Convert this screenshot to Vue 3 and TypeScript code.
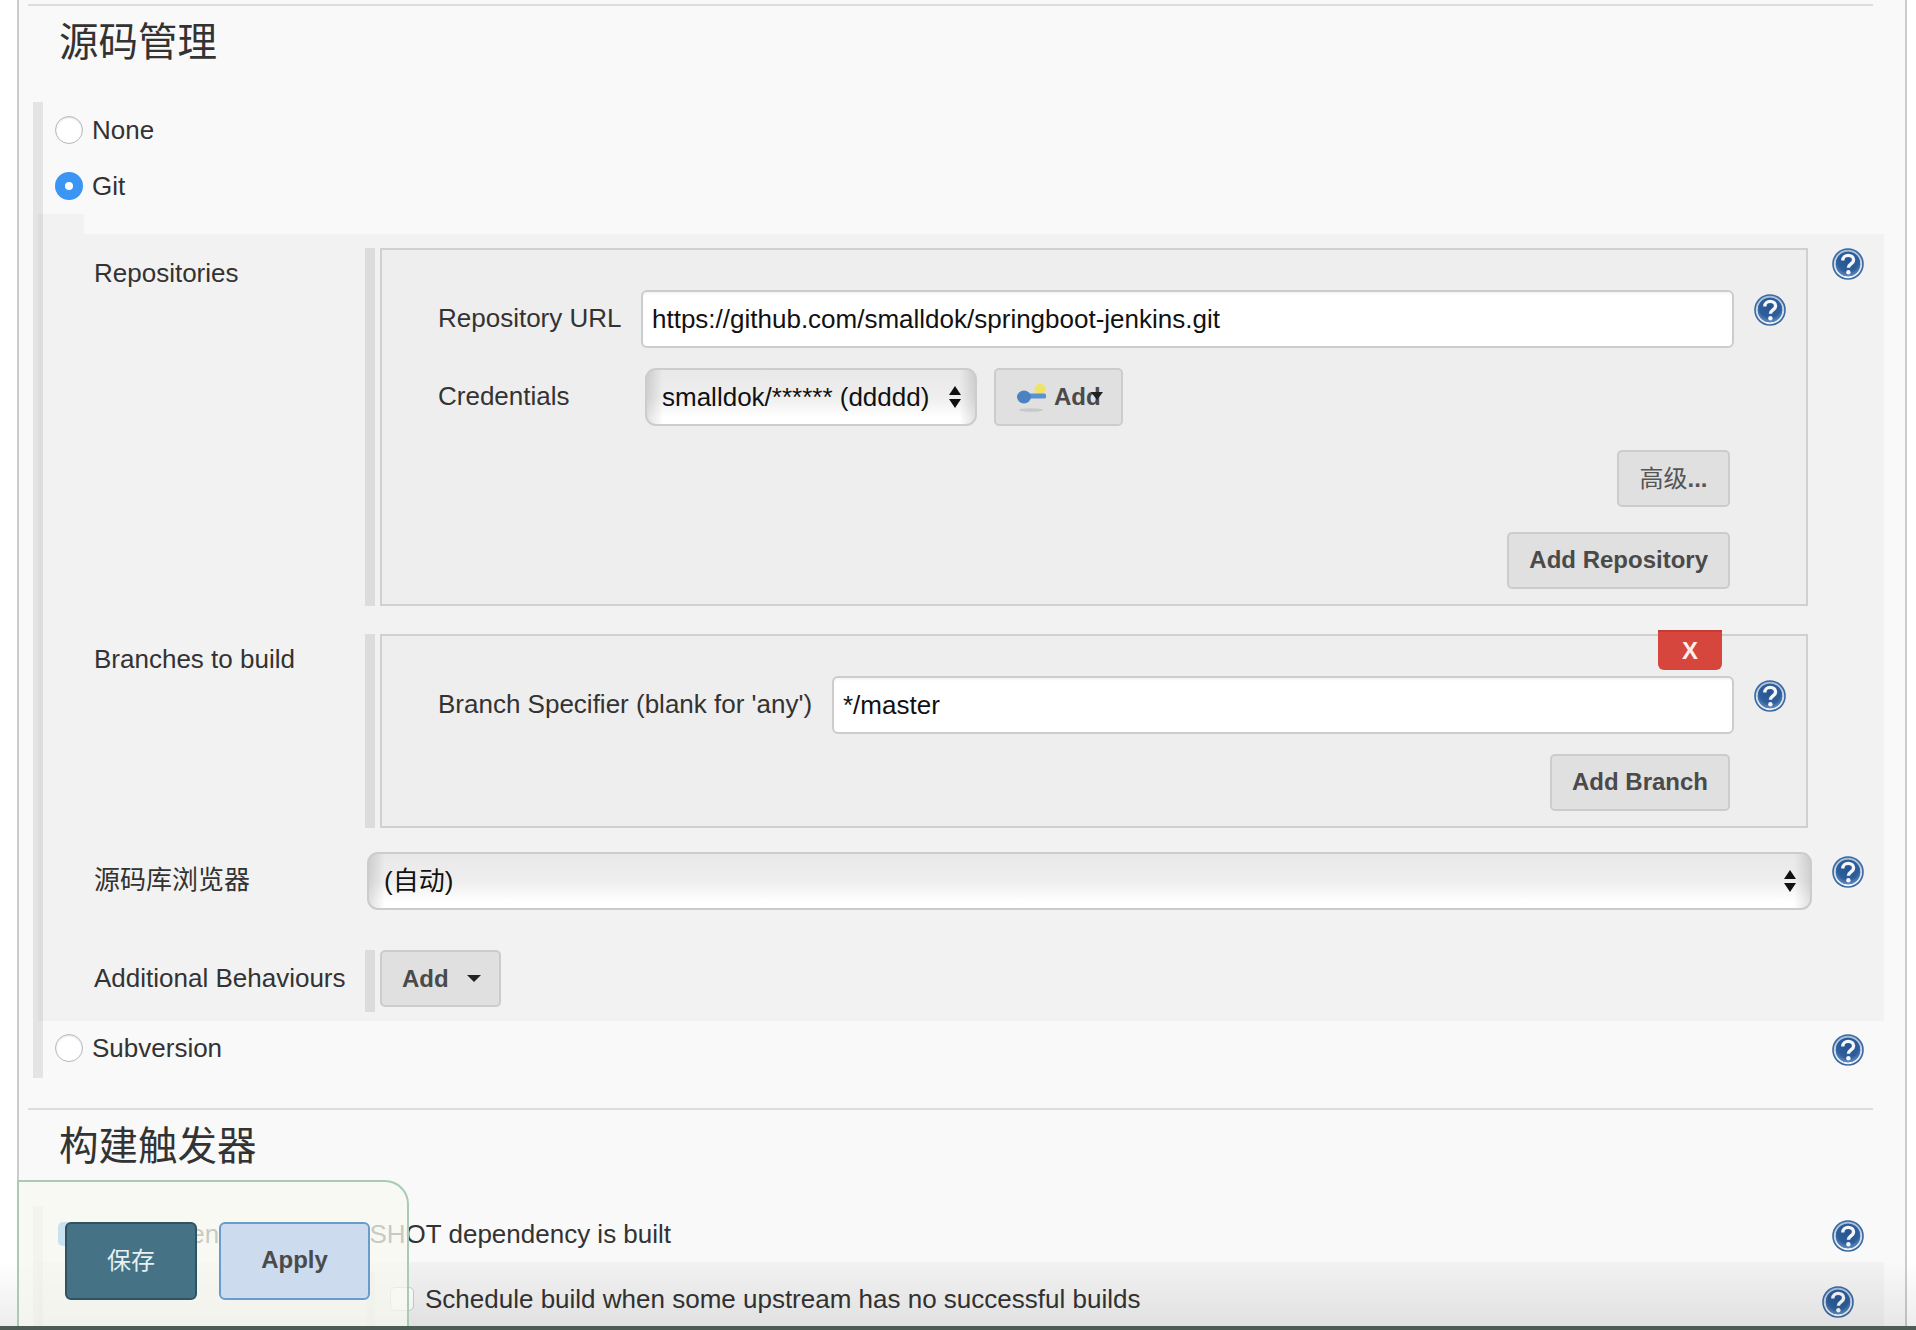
<script setup lang="ts">
const cjk = 'zh';
</script>

<template>
  <div class="page" :lang="cjk">
    <svg class="defs" width="0" height="0" aria-hidden="true">
      <defs>
        <radialGradient id="helpFill" cx="50%" cy="35%" r="70%">
          <stop offset="0%" stop-color="#26548f" />
          <stop offset="65%" stop-color="#2f5e9c" />
          <stop offset="100%" stop-color="#6f96c4" />
        </radialGradient>
        <linearGradient id="helpRing" x1="0" y1="0" x2="0" y2="1">
          <stop offset="0%" stop-color="#a3bdd9" />
          <stop offset="100%" stop-color="#eef3f9" />
        </linearGradient>
        <symbol id="help" viewBox="0 0 32 32">
          <circle cx="16" cy="16" r="15.8" fill="#3a689f" />
          <circle cx="16" cy="16" r="13.2" fill="none" stroke="url(#helpRing)" stroke-width="2" />
          <circle cx="16" cy="16" r="12.2" fill="url(#helpFill)" />
          <path d="M10.8 12.4c0-3 2.5-5 5.4-5s5.4 1.8 5.4 4.5c0 3.9-5.2 3.9-5.2 7.8" fill="none" stroke="#f3f6fa" stroke-width="3.4" />
          <circle cx="16.4" cy="24.2" r="2.2" fill="#f3f6fa" />
        </symbol>
      </defs>
    </svg>

    <main class="panel">
      <section>
        <hr class="rule" />
        <h2 class="title">源码管理</h2>
        <div class="block">
          <label class="choice"><span class="radio"></span><span>None</span></label>
          <label class="choice"><span class="radio on"></span><span>Git</span></label>

          <div class="notch"></div>
          <div class="drop">
            <div class="row">
              <div class="label">Repositories</div>
              <div class="content barred wide">
                <div class="box">
                  <div class="field">
                    <span class="field-label">Repository URL</span>
                    <input class="text" value="https://github.com/smalldok/springboot-jenkins.git" />
                    <svg class="help inner"><use href="#help" /></svg>
                  </div>
                  <div class="field second">
                    <span class="field-label">Credentials</span>
                    <div class="sel cred">
                      <select><option>smalldok/****** (ddddd)</option></select>
                      <span class="updown"></span>
                    </div>
                    <button class="btn key-btn" type="button">
                      <svg class="key" viewBox="0 0 32 30" width="32" height="30">
                        <ellipse cx="14" cy="28" rx="12" ry="1.8" fill="#c8c8c8" />
                        <circle cx="23" cy="7" r="5.5" fill="#f1e36a" />
                        <rect x="9" y="11.5" width="20" height="5" rx="1.5" fill="#5a92cc" />
                        <ellipse cx="7" cy="15" rx="7" ry="6.4" fill="#4a82c2" />
                      </svg>
                      <span>Add</span>
                      <span class="caret over"></span>
                    </button>
                  </div>
                  <div class="actions first"><button class="btn normal" type="button">高级<b>...</b></button></div>
                  <div class="actions"><button class="btn" type="button">Add Repository</button></div>
                </div>
              </div>
              <svg class="help"><use href="#help" /></svg>
            </div>

            <div class="row gap-branches">
              <div class="label">Branches to build</div>
              <div class="content barred wide">
                <div class="box branch">
                  <button class="del" type="button">X</button>
                  <div class="field">
                    <span class="field-label auto">Branch Specifier (blank for 'any')</span>
                    <input class="text" value="*/master" />
                    <svg class="help inner"><use href="#help" /></svg>
                  </div>
                  <div class="actions tight"><button class="btn" type="button">Add Branch</button></div>
                </div>
              </div>
              <div class="help-space"></div>
            </div>

            <div class="row gap-browser">
              <div class="label low">源码库浏览器</div>
              <div class="content">
                <div class="sel browser">
                  <select><option>(自动)</option></select>
                  <span class="updown"></span>
                </div>
              </div>
              <svg class="help nudge"><use href="#help" /></svg>
            </div>

            <div class="row gap-behave">
              <div class="label low">Additional Behaviours</div>
              <div class="content barred short">
                <button class="btn add-menu" type="button"><span>Add</span><span class="caret"></span></button>
              </div>
              <div class="help-space"></div>
            </div>
          </div>

          <label class="choice last">
            <span class="radio"></span><span>Subversion</span>
            <svg class="help end"><use href="#help" /></svg>
          </label>
        </div>
      </section>

      <section class="next">
        <hr class="rule" />
        <h2 class="title">构建触发器</h2>
        <div class="block open">
          <label class="choice check-row">
            <span class="check on"></span><span>Build whenever a SNAPSHOT dependency is built</span>
            <svg class="help end"><use href="#help" /></svg>
          </label>
          <div class="drop lower">
            <div class="lower-row">
              <span class="check"></span>
              <span>Schedule build when some upstream has no successful builds</span>
              <svg class="help lower-help"><use href="#help" /></svg>
            </div>
          </div>
        </div>
      </section>
    </main>

    <div class="fade"></div>

    <div class="floater">
      <button class="save" type="button">保存</button>
      <button class="apply" type="button">Apply</button>
    </div>
    <div class="edge"></div>
  </div>
</template>

<style scoped>
.page {
  position: relative;
  width: 1916px;
  height: 1330px;
  overflow: hidden;
  background: #fff;
  color: #333;
  font-family: "Liberation Sans", "Noto Sans CJK SC", sans-serif;
  font-size: 26px;
  line-height: 30px;
}
.defs {
  position: absolute;
}
.panel {
  box-sizing: border-box;
  width: 1890px;
  height: 1330px;
  margin-left: 17px;
  padding: 4px 0 0 9px;
  background: #f9f9f9;
  border-left: 2px solid #ccc;
  border-right: 2px solid #ccc;
}
.rule {
  width: 1845px;
  height: 2px;
  margin: 0;
  border: 0;
  background: #ddd;
}
.title {
  height: 96px;
  margin: 0;
  padding-left: 31px;
  box-sizing: border-box;
  font-size: 39.5px;
  font-weight: 400;
  line-height: 72px;
  color: #333;
}
.block {
  box-sizing: border-box;
  width: 1851px;
  height: 976px;
  margin-left: 5px;
  border-left: 10px solid #e4e4e4;
}
.block.open {
  height: 140px;
}
.choice {
  display: flex;
  align-items: center;
  gap: 9px;
  height: 56px;
  margin-left: -10px;
  padding-left: 22px;
}
.choice.last {
  height: 54px;
}
.radio {
  box-sizing: border-box;
  flex: none;
  width: 28px;
  height: 28px;
  border: 1px solid #b8b8b8;
  border-radius: 50%;
  background: #fff;
  box-shadow: inset 0 1px 2px rgba(0, 0, 0, 0.12);
}
.radio.on {
  border: 10px solid #3a95f4;
  box-shadow: none;
}
.notch {
  width: 46px;
  height: 20px;
  margin-left: -5px;
  background: rgba(0, 0, 0, 0.028);
}
.drop {
  box-sizing: border-box;
  width: 1846px;
  height: 787px;
  margin-left: -5px;
  padding-top: 14px;
  background: rgba(0, 0, 0, 0.028);
}
.row {
  display: flex;
  align-items: flex-start;
}
.gap-branches {
  margin-top: 28px;
}
.gap-browser {
  margin-top: 24px;
}
.gap-behave {
  margin-top: 40px;
}
.label {
  flex: none;
  box-sizing: border-box;
  width: 327px;
  padding: 10px 0 0 56px;
  white-space: nowrap;
}
.label.low {
  padding-top: 13px;
}
.content {
  flex: none;
  width: 1467px;
}
.barred {
  box-sizing: border-box;
  display: flex;
  border-left: 10px solid #dcdcdc;
  padding-left: 5px;
  width: 1443px;
  margin-right: 24px;
}
.short {
  height: 62px;
}
.help {
  flex: none;
  width: 32px;
  height: 32px;
}
.help.inner {
  margin-left: 20px;
  margin-top: 4px;
}
.help.nudge {
  margin-top: 4px;
}
.help.end {
  margin-left: auto;
  margin-right: 20px;
  margin-top: 4px;
}
.help-space {
  width: 32px;
}
.box {
  box-sizing: border-box;
  width: 1428px;
  height: 358px;
  padding: 40px 20px 0 56px;
  border: 2px solid #d0d0d0;
  background: #eee;
}
.box.branch {
  position: relative;
  height: 194px;
}
.field {
  display: flex;
  align-items: flex-start;
  height: 58px;
}
.field.second {
  margin-top: 20px;
}
.field-label {
  flex: none;
  width: 203px;
  padding-top: 13px;
  white-space: nowrap;
}
.field-label.auto {
  width: 394px;
}
.text {
  flex: 1;
  min-width: 0;
  box-sizing: border-box;
  height: 58px;
  padding: 0 9px;
  border: 2px solid #ccc;
  border-radius: 6px;
  background: #fff;
  box-shadow: inset 0 2px 2px rgba(0, 0, 0, 0.04);
  color: #111;
  font: 26px "Liberation Sans", sans-serif;
  outline: none;
}
.sel {
  position: relative;
  box-sizing: border-box;
  height: 58px;
}
.sel select {
  appearance: none;
  display: block;
  box-sizing: border-box;
  width: 100%;
  height: 58px;
  padding: 0 40px 0 15px;
  border: 2px solid #ccc;
  border-radius: 11px;
  color: #111;
  font: 26px "Liberation Sans", "Noto Sans CJK SC", sans-serif;
  outline: none;
  background:
    linear-gradient(90deg, rgba(0, 0, 0, 0.12), rgba(0, 0, 0, 0) 16px),
    linear-gradient(270deg, rgba(0, 0, 0, 0.12), rgba(0, 0, 0, 0) 16px),
    linear-gradient(180deg, #e9e9e9 0%, #eeeeee 50%, #fff 88%);
}
.cred {
  flex: none;
  width: 332px;
  margin-left: 4px;
}
.browser {
  width: 1445px;
  margin-left: 2px;
}
.updown {
  position: absolute;
  right: 15px;
  top: 18px;
  width: 13px;
  height: 22px;
}
.updown::before,
.updown::after {
  content: "";
  position: absolute;
  left: 0;
  border-left: 6.5px solid transparent;
  border-right: 6.5px solid transparent;
}
.updown::before {
  top: 0;
  border-bottom: 9.5px solid #111;
}
.updown::after {
  bottom: 0;
  border-top: 9.5px solid #111;
}
.btn {
  box-sizing: border-box;
  height: 57px;
  padding: 0 20px 2px;
  border: 2px solid #ccc;
  border-radius: 5px;
  background: #e0e0e0;
  color: #4a4a4a;
  font: 700 24px "Liberation Sans", "Noto Sans CJK SC", sans-serif;
}
.btn.normal {
  width: 113px;
  padding: 0 0 4px;
  font-weight: 400;
  color: #555;
}
.key-btn {
  position: relative;
  display: flex;
  align-items: center;
  flex: none;
  width: 129px;
  height: 58px;
  margin-left: 17px;
  padding: 0 0 0 21px;
  gap: 5px;
}
.key {
  flex: none;
  filter: blur(0.5px);
}
.caret {
  display: inline-block;
  border-left: 7.5px solid transparent;
  border-right: 7.5px solid transparent;
  border-top: 7px solid #222;
}
.caret.over {
  position: absolute;
  left: 95px;
  top: 22px;
  border-left-width: 6.5px;
  border-right-width: 6.5px;
  border-top-width: 8px;
}
.add-menu {
  display: flex;
  align-items: center;
  gap: 18px;
  width: 121px;
  padding: 0 0 0 20px;
}
.actions {
  display: flex;
  justify-content: flex-end;
  margin-top: 25px;
  padding-right: 56px;
}
.actions.first {
  margin-top: 24px;
}
.actions.tight {
  margin-top: 20px;
}
.del {
  position: absolute;
  top: -6px;
  right: 84px;
  box-sizing: border-box;
  width: 64px;
  height: 40px;
  padding: 0;
  border: 0;
  border-top: 2px solid #c43c33;
  border-radius: 0 0 6px 6px;
  background: #d6463d;
  color: #fbeeee;
  font: 700 24px "Liberation Sans", sans-serif;
}
.next {
  margin-top: 30px;
}
.check {
  box-sizing: border-box;
  flex: none;
  width: 24px;
  height: 24px;
  border: 1px solid #ccc;
  border-radius: 5px;
  background: #fff;
}
.check.on {
  width: 27px;
  border: 0;
  background: #3a95f4;
}
.check-row {
  padding-left: 25px;
  gap: 7px;
}
.drop.lower {
  height: 68px;
  padding: 10px 0 0;
}
.lower-row {
  box-sizing: border-box;
  display: flex;
  align-items: center;
  gap: 11px;
  height: 54px;
  margin-left: 329px;
  padding-left: 15px;
  border-left: 8px solid #e6e6e6;
}
.help.lower-help {
  margin-left: auto;
  margin-right: 30px;
  margin-top: 6px;
}
.fade {
  position: absolute;
  left: 0;
  right: 0;
  bottom: 0;
  height: 70px;
  background: linear-gradient(180deg, rgba(0, 0, 0, 0), rgba(0, 0, 0, 0.075));
  pointer-events: none;
}
.floater {
  position: absolute;
  left: 17px;
  top: 1180px;
  box-sizing: border-box;
  display: flex;
  align-items: flex-start;
  gap: 22px;
  width: 392px;
  height: 150px;
  padding: 40px 0 0 46px;
  border: 2px solid #a9cbb6;
  border-bottom: 0;
  border-radius: 0 24px 0 0;
  background: rgba(247, 249, 240, 0.76);
}
.save,
.apply {
  box-sizing: border-box;
  height: 78px;
  border-radius: 6px;
  font: 24px "Liberation Sans", "Noto Sans CJK SC", sans-serif;
}
.save {
  width: 132px;
  padding-bottom: 7px;
  border: 2px solid #2f5361;
  background: #457385;
  color: #e8f0f2;
}
.apply {
  width: 151px;
  padding-bottom: 3px;
  border: 2px solid #6b9bcb;
  background: #ccdbee;
  color: #4a4a4a;
  font-weight: 700;
}
.edge {
  position: absolute;
  left: 0;
  right: 0;
  bottom: 0;
  height: 4px;
  background: #4e5c56;
}
</style>

<style>
html,
body {
  margin: 0;
  background: #fff;
}
</style>
